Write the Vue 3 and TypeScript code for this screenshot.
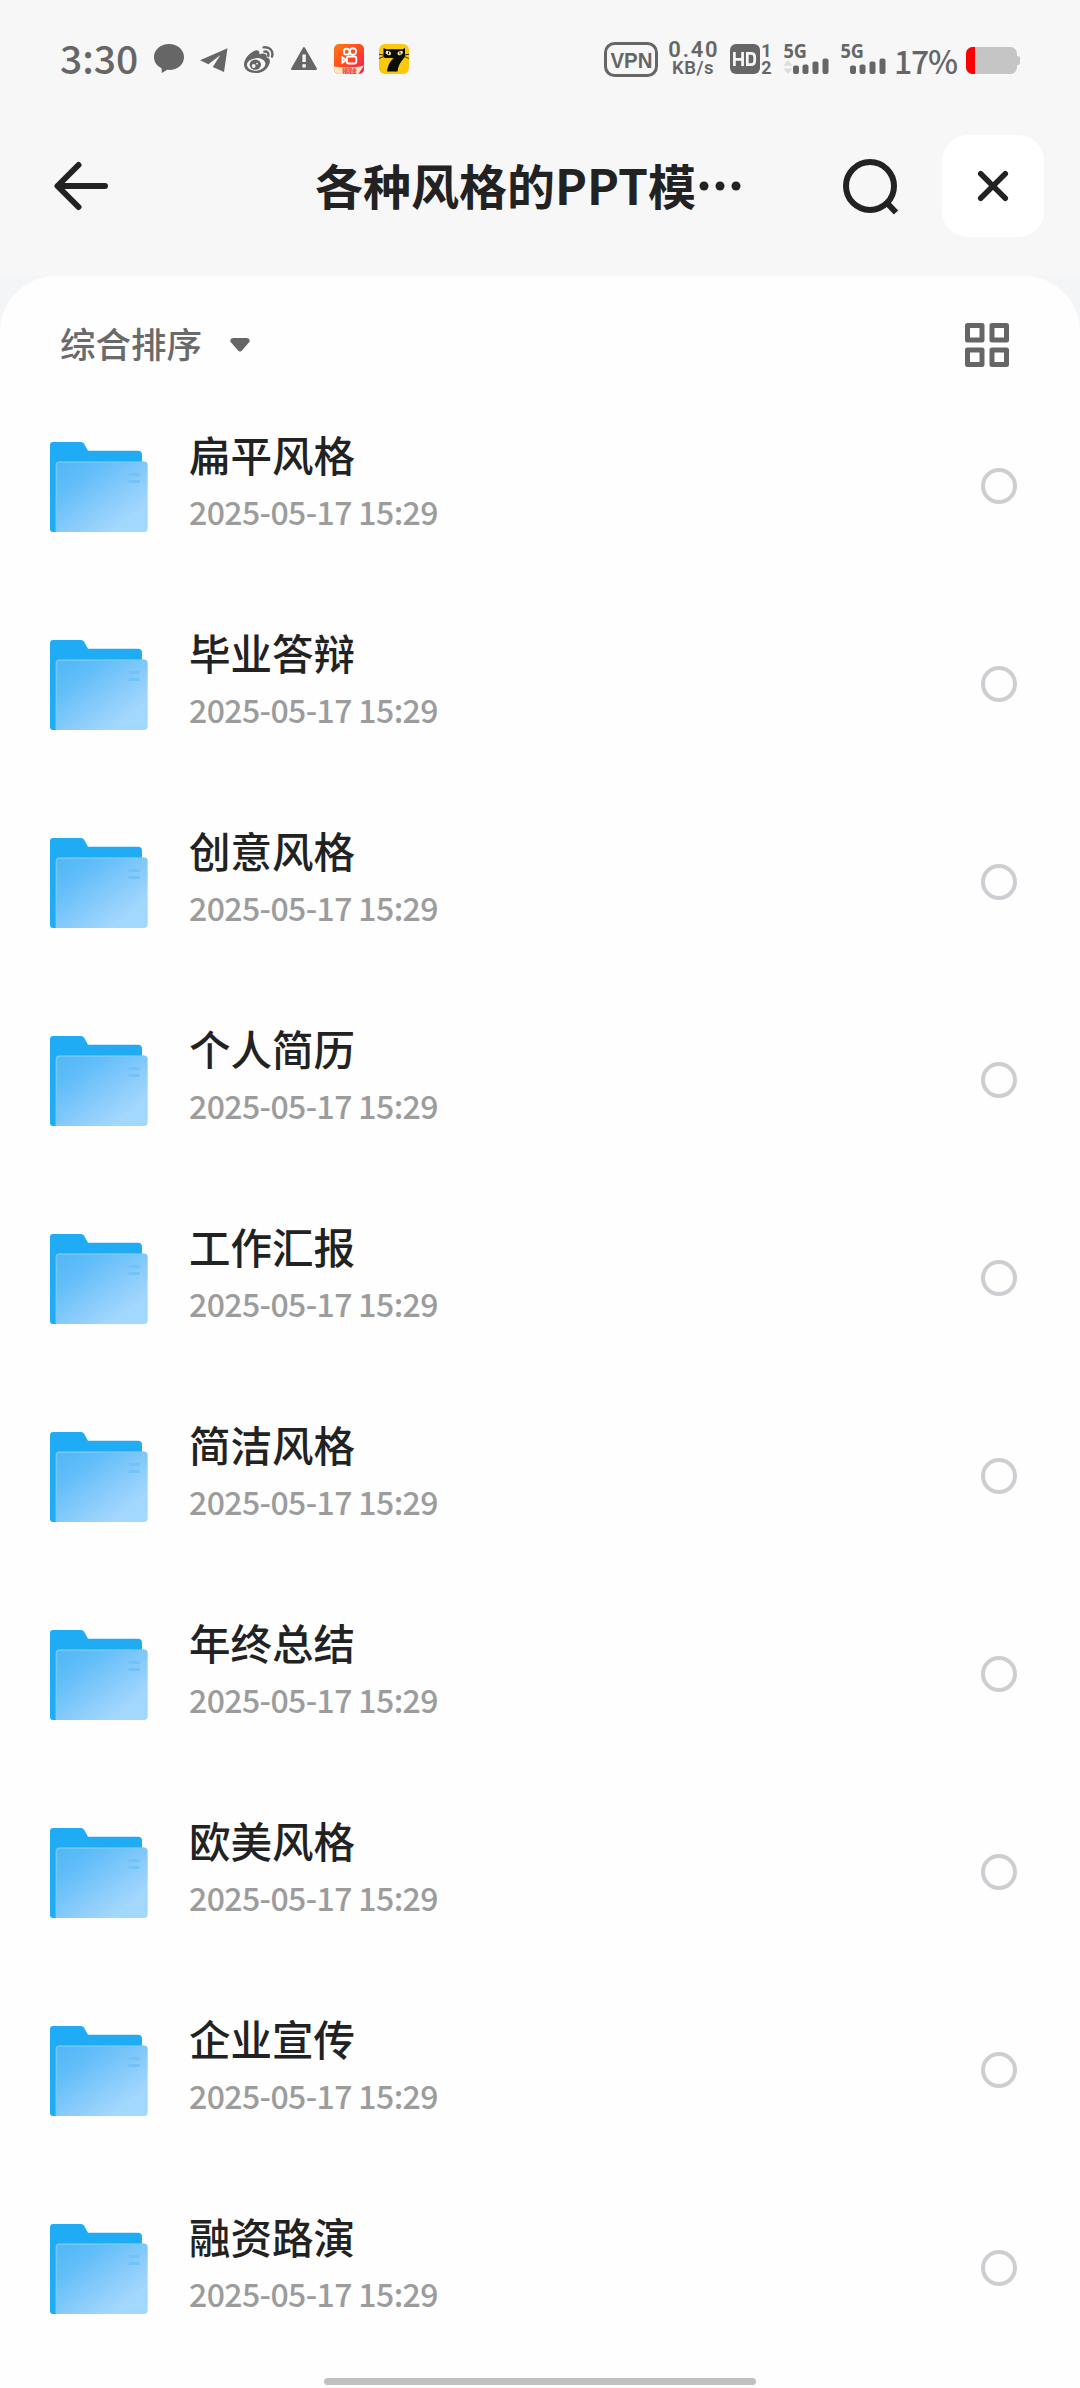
<script setup lang="ts">
import { ref } from 'vue'

interface Folder {
  name: string
  date: string
}

const date = '2025-05-17 15:29'
const folders = ref<Folder[]>(
  [
    '扁平风格',
    '毕业答辩',
    '创意风格',
    '个人简历',
    '工作汇报',
    '简洁风格',
    '年终总结',
    '欧美风格',
    '企业宣传',
    '融资路演',
  ].map((name) => ({ name, date })),
)
</script>

<template>
  <div class="screen">
    <header class="status">
      <div class="status-left">
        <span class="time">3:30</span>
        <svg width="30" height="30" viewBox="0 0 30 30">
          <path fill="#666" d="M15 0C6.600 0 0 5.700 0 13c0 5 2.800 9 7.600 11.200L7.800 29l5.400-3.200C23 26.700 30 21 30 13 30 5.700 23.500 0 15 0Z" />
        </svg>
        <svg width="30" height="30" viewBox="0 0 30 30">
          <path fill="#666" d="M1 16.200 28.500 4.200 25 28 13.800 23l7.600-12-12 9.200Z" />
        </svg>
        <svg width="30" height="30" viewBox="0 0 30 30">
          <path fill="#666" d="M10.600 6.800c3-1.400 5.200-.2 4.800 3.400 4-1.600 8-1 7.200 3 3.600 1.200 4 3.800 2.600 7C23 26 18 29 12 29 5 29 0 25.500 0 20.500 0 15 5.600 9 10.600 6.800Z" />
          <ellipse cx="12.200" cy="20.400" rx="9.300" ry="6.300" fill="#f7f7f7" transform="rotate(-7 12.200 20.400)" />
          <ellipse cx="11.300" cy="20.600" rx="5.700" ry="5.200" fill="#666" />
          <circle cx="9.700" cy="22" r="1.900" fill="#f7f7f7" />
          <circle cx="13" cy="19.700" r=".9" fill="#f7f7f7" />
          <path fill="none" stroke="#666" stroke-width="2.400" stroke-linecap="round" d="M19.600 3.400c6-1 10.200 3.600 8.400 9.200M20.300 7.600c3-.5 4.700 1.600 3.900 4.200" />
        </svg>
        <svg width="30" height="30" viewBox="0 0 30 30">
          <path fill="#666" stroke="#666" stroke-width="2" stroke-linejoin="round" d="M15 4 27 25H3Z" />
          <path fill="#f7f7f7" d="M13.400 10.500h3.400v7.500h-3.400ZM13.400 20.200h3.400v3.200h-3.400Z" />
        </svg>
        <svg width="30" height="30" viewBox="0 0 30 30">
          <defs>
            <linearGradient id="kwai" x1="0" y1="0" x2="1" y2="1">
              <stop offset="0" stop-color="#ff7a12" />
              <stop offset=".5" stop-color="#ff4a22" />
              <stop offset="1" stop-color="#f8145a" />
            </linearGradient>
          </defs>
          <rect width="30" height="30" rx="5" fill="url(#kwai)" />
          <path fill="#ffe3bd" d="M0 22.500C9 24 20 24 30 21.500L24.500 30H5a5 5 0 0 1-5-5Z" />
          <g fill="none" stroke="#fff" stroke-width="1.900">
            <circle cx="12.700" cy="7.700" r="2.900" />
            <circle cx="19" cy="7.500" r="3.200" />
            <rect x="12.800" y="12.500" width="9.500" height="7" rx="2" />
            <path d="M12.500 16 8.500 13.500v5Z" />
          </g>
          <text x="8" y="28.800" font-size="5.500" font-weight="700" fill="#e8261c" textLength="15">领现金</text>
        </svg>
        <svg width="30" height="30" viewBox="0 0 30 30">
          <rect width="30" height="30" rx="6" fill="#f8c90c" />
          <path fill="#0c0c08" d="M4.500 4 7 5.200h16.500L26 4v7.500c0 1.500-1 2.500-2.200 4C21.500 18.500 19 22 18.500 27.500H8c.5-5.500 2.500-9.500 6.500-13.500H6.500c-1.400 0-2-1-2-2.500Z" />
          <path fill="none" stroke="#0c0c08" stroke-width=".8" d="M0 10.300 5 11M0 14.500 5 12.500M30 10.300 25 11M30 14.500 25 12.500" />
          <g fill="#f8eda0">
            <ellipse cx="9.300" cy="9" rx="2.900" ry="1.900" transform="rotate(25 9.300 9)" />
            <ellipse cx="21.200" cy="9" rx="2.900" ry="1.900" transform="rotate(-25 21.200 9)" />
          </g>
          <path fill="#0c0c08" d="M9 7.800h1v2.500H9ZM20.500 7.800h1v2.500h-1Z" />
        </svg>
      </div>
      <div class="status-right">
        <svg width="54" height="35" viewBox="0 0 54 35">
          <rect x="1.500" y="1.500" width="51" height="32" rx="9" fill="none" stroke="#666" stroke-width="3" />
          <text x="6.500" y="25.500" class="vpn" textLength="42" lengthAdjust="spacingAndGlyphs">VPN</text>
        </svg>
        <div class="speed">
          <span class="rate">0.40</span>
          <span class="unit">KB/s</span>
        </div>
        <svg class="hd" width="30" height="30" viewBox="0 0 30 30">
          <rect width="30" height="30" rx="6" fill="#666" />
          <path fill="none" stroke="#f7f7f7" stroke-width="2.700" d="M4.400 8v14M12.600 8v14M4.400 15.300h8.200M17.300 9.300h3.700q3.700 0 3.700 3.700v4q0 3.700-3.700 3.700h-3.700Z" />
        </svg>
        <div class="sims">
          <span>1</span>
          <span>2</span>
        </div>
        <svg class="sig" width="46" height="40" viewBox="0 0 46 40">
          <text x="0.500" y="19" class="net" textLength="23.500" lengthAdjust="spacingAndGlyphs">5G</text>
          <path fill="#dcdcdc" d="m5 21 4.500 5.500h-9ZM5 35l4.500-5.500h-9Z" />
          <g fill="#666">
            <rect x="10" y="26.500" width="6" height="8.500" rx="2" />
            <rect x="19.500" y="25.500" width="6" height="9.500" rx="2" />
            <rect x="29.500" y="22.500" width="6" height="12.500" rx="2" />
            <rect x="39.500" y="19.500" width="6" height="15.500" rx="2" />
          </g>
        </svg>
        <svg class="sig" width="46" height="40" viewBox="0 0 46 40">
          <text x="0.500" y="19" class="net" textLength="23.500" lengthAdjust="spacingAndGlyphs">5G</text>
          <g fill="#666">
            <rect x="10" y="26.500" width="6" height="8.500" rx="2" />
            <rect x="19.500" y="25.500" width="6" height="9.500" rx="2" />
            <rect x="29.500" y="22.500" width="6" height="12.500" rx="2" />
            <rect x="39.500" y="19.500" width="6" height="15.500" rx="2" />
          </g>
        </svg>
        <span class="percent">17%</span>
        <svg class="battery" width="54" height="27" viewBox="0 0 54 27">
          <defs>
            <clipPath id="cell"><rect width="51" height="27" rx="6.500" /></clipPath>
          </defs>
          <rect x="45" y="9" width="9" height="9" rx="2.500" fill="#c5c5c5" />
          <g clip-path="url(#cell)">
            <rect width="51" height="27" fill="#c5c5c5" />
            <rect width="9" height="27" fill="#f00" />
          </g>
        </svg>
      </div>
    </header>

    <nav class="bar">
      <svg class="back" width="54" height="50" viewBox="0 0 54 50">
        <path fill="none" stroke="#222" stroke-width="6" stroke-linecap="round" stroke-linejoin="round" d="M51 25H4M24.500 4 3.500 25l21 21" />
      </svg>
      <h1 class="title"><span>各种风格的PPT模</span><svg width="48" height="12" viewBox="0 0 48 12"><g fill="#222"><circle cx="8" cy="6" r="4.500" /><circle cx="24" cy="6" r="4.500" /><circle cx="40" cy="6" r="4.500" /></g></svg></h1>
      <svg class="search" width="57" height="57" viewBox="0 0 57 57">
        <circle cx="27" cy="27" r="24" fill="none" stroke="#222" stroke-width="6" />
        <path stroke="#222" stroke-width="6" d="m43.500 43.500 9.500 10" />
      </svg>
      <button class="close" type="button" aria-label="关闭">
        <svg width="32" height="32" viewBox="0 0 32 32">
          <path stroke="#222" stroke-width="5.500" stroke-linecap="round" d="m3.700 3.700 24.600 24.600M28.300 3.700 3.700 28.300" />
        </svg>
      </button>
    </nav>

    <div class="sheet-wrap">
      <main class="sheet">
        <div class="tools">
          <span class="sort">综合排序</span>
          <svg class="caret" width="20" height="14" viewBox="0 0 20 14">
            <path fill="#666" d="M3.500 0h13c3 0 4 2.700 2.400 4.600l-6.700 7.700c-1.300 1.600-3.100 1.600-4.400 0L1.100 4.600C-.5 2.700.5 0 3.500 0Z" />
          </svg>
          <svg class="grid" width="44" height="44" viewBox="0 0 44 44">
            <g fill="none" stroke="#666" stroke-width="5" stroke-linejoin="round">
              <rect x="2.500" y="2.500" width="14.500" height="14.500" />
              <rect x="27" y="2.500" width="14.500" height="14.500" />
              <rect x="2.500" y="27" width="14.500" height="14.500" />
              <rect x="27" y="27" width="14.500" height="14.500" />
            </g>
          </svg>
        </div>
        <svg class="defs" width="0" height="0">
          <defs>
            <linearGradient id="front" x1="0" y1=".1" x2=".85" y2="1">
              <stop offset="0" stop-color="#54b8f7" />
              <stop offset=".22" stop-color="#60bdf8" />
              <stop offset=".6" stop-color="#8accfb" />
              <stop offset=".85" stop-color="#a2d7fe" />
            </linearGradient>
          </defs>
        </svg>
        <ul class="list">
          <li v-for="f in folders" :key="f.name" class="row">
            <svg class="folder" width="98" height="90" viewBox="0 0 98 90">
              <path fill="#20acf5" d="M3 0h28q2 0 3 1.500L38 8.700h50q4 0 4 4V40L10 90H3q-3 0-3-3V3q0-3 3-3Z" />
              <path fill="url(#front)" d="M9 19.500h85q3.700 0 3.700 3.700V86q0 4-3.700 4H5.700V23q0-3.500 3.300-3.500Z" />
              <path fill="none" stroke="#7cc9fa" stroke-width="1.500" d="M6.500 90V23q0-2.800 2.800-2.800H94" opacity=".8" />
              <path stroke="#70c2f9" stroke-width="3" d="M78.500 32.500h11M78.500 39.500h11" />
            </svg>
            <div class="info">
              <span class="name">{{ f.name }}</span>
              <span class="date">{{ f.date }}</span>
            </div>
            <span class="radio"></span>
          </li>
        </ul>
        <div class="home"></div>
      </main>
    </div>
  </div>
</template>

<style>
body {
  margin: 0;
}
</style>

<style scoped>
.screen {
  box-sizing: border-box;
  width: 1080px;
  height: 2388px;
  overflow: hidden;
  display: flex;
  flex-direction: column;
  background: #f7f7f7;
  color: #222;
  font-family: 'Noto Sans CJK SC', 'Noto Sans', sans-serif;
}
svg {
  display: block;
  flex: none;
}
.status {
  height: 118px;
  box-sizing: border-box;
  padding: 0 60px;
  display: flex;
  justify-content: space-between;
  color: #666;
}
.status-left,
.status-right {
  display: flex;
  align-items: center;
  height: 118px;
}
.status-left {
  gap: 15px;
}
.time {
  width: 79px;
  padding-bottom: 5px;
  font-size: 39px;
  line-height: 40px;
  font-weight: 500;
  white-space: nowrap;
}
.vpn {
  font: 700 22px 'Liberation Sans', sans-serif;
  fill: #666;
}
.speed {
  width: 52px;
  margin: 0 0 0 9px;
  padding-bottom: 1px;
  display: flex;
  flex-direction: column;
  align-items: center;
  white-space: nowrap;
  font-family: Roboto, sans-serif;
}
.rate {
  font-size: 22px;
  line-height: 19px;
  font-weight: 600;
  letter-spacing: 1.8px;
  margin-right: -1.8px;
}
.unit {
  font-size: 18.5px;
  line-height: 18px;
  font-weight: 600;
  letter-spacing: 0.5px;
}
.hd {
  margin-left: 11px;
}
.sims {
  width: 13px;
  display: flex;
  flex-direction: column;
  align-items: center;
  font-family: Roboto, sans-serif;
  font-size: 18px;
  line-height: 17px;
  font-weight: 700;
}
.net {
  font: 700 19px 'Noto Sans', sans-serif;
  fill: #666;
}
.sig {
  margin-left: 10px;
}
.sig + .sig {
  margin-left: 11px;
}
.percent {
  width: 62px;
  margin-left: 8px;
  padding-top: 1px;
  font-size: 32px;
  line-height: 36px;
  font-weight: 500;
  letter-spacing: -1.2px;
  white-space: nowrap;
}
.battery {
  margin: 3px 0 0 10px;
}
.bar {
  height: 158px;
  box-sizing: border-box;
  padding: 17px 36px 39px 54px;
  display: flex;
  align-items: center;
}
.title {
  display: flex;
  align-items: center;
  width: 430px;
  margin: 0 0 0 207px;
  font-size: 48px;
  line-height: 60px;
  font-weight: 700;
  white-space: nowrap;
}
.title span {
  padding-bottom: 4px;
}
.search {
  margin: 3px 0 0 98px;
}
.close {
  width: 102px;
  height: 102px;
  margin-left: auto;
  padding: 0;
  border: 0;
  border-radius: 26px;
  background: #fff;
  display: flex;
  align-items: center;
  justify-content: center;
}
.sheet-wrap {
  flex: 1;
  background: #f3f5f7;
}
.sheet {
  box-sizing: border-box;
  height: 2112px;
  display: flex;
  flex-direction: column;
  border-radius: 56px 56px 0 0;
  background: #fefefe;
}
.tools {
  height: 111px;
  padding: 27px 71px 0 60px;
  box-sizing: border-box;
  display: flex;
  align-items: center;
}
.sort {
  width: 144px;
  padding-bottom: 4px;
  font-size: 35.5px;
  line-height: 40px;
  font-weight: 500;
  color: #6a6a6a;
  white-space: nowrap;
}
.caret {
  margin-left: 26px;
}
.grid {
  margin-left: auto;
}
.defs {
  height: 0;
}
.list {
  margin: 0;
  padding: 0;
  list-style: none;
}
.row {
  height: 198px;
  box-sizing: border-box;
  padding: 0 63px 0 50px;
  display: flex;
  align-items: center;
}
.folder {
  margin-top: 2px;
}
.info {
  display: flex;
  flex-direction: column;
  margin-left: 41px;
  padding-bottom: 8px;
}
.name {
  font-size: 41.5px;
  line-height: 58px;
  font-weight: 500;
}
.date {
  font-size: 32px;
  line-height: 56px;
  font-weight: 500;
  letter-spacing: -0.6px;
  color: #9c9c9c;
}
.radio {
  box-sizing: border-box;
  width: 36px;
  height: 36px;
  margin-left: auto;
  border: 4px solid #cdcdd2;
  border-radius: 50%;
}
.home {
  width: 432px;
  height: 7px;
  margin: 11px auto 0;
  border-radius: 4px;
  background: #c0c0c0;
}
</style>
